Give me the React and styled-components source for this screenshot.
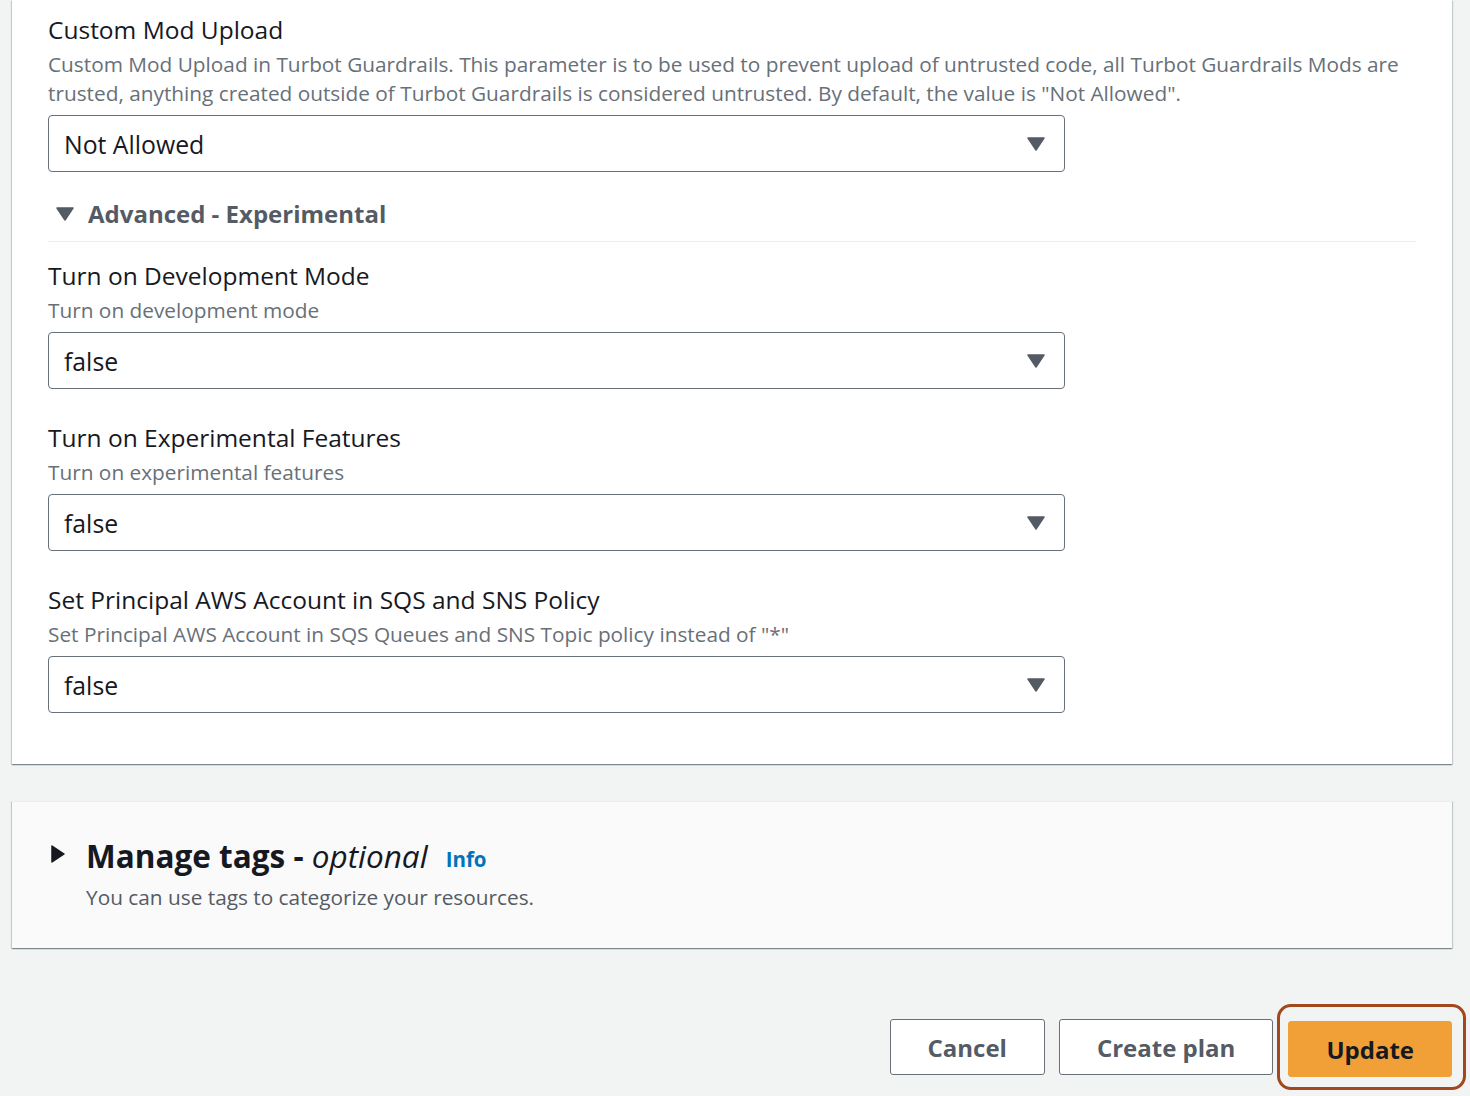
import styled, { createGlobalStyle } from "styled-components";

const GlobalStyle = createGlobalStyle`
  html, body {
    margin: 0;
    padding: 0;
    background: #f2f3f3;
    font-family: "Open Sans", "Noto Sans", sans-serif;
  }
`;

const fields = [
  {
    label: "Turn on Development Mode",
    desc: "Turn on development mode",
    value: "false",
  },
  {
    label: "Turn on Experimental Features",
    desc: "Turn on experimental features",
    value: "false",
  },
  {
    label: "Set Principal AWS Account in SQS and SNS Policy",
    desc: 'Set Principal AWS Account in SQS Queues and SNS Topic policy instead of "*"',
    value: "false",
  },
];

function Caret({ dir = "down", color = "#545b64", size = 18 }) {
  const d = dir === "down" ? "M1 3 H17 L9 15 Z" : "M3 1 V17 L15 9 Z";
  return (
    <svg width={size} height={size} viewBox="0 0 18 18">
      <path d={d} fill={color} stroke={color} strokeWidth="1.5" strokeLinejoin="round" />
    </svg>
  );
}

function Select({ value }) {
  return (
    <SelectBox>
      <span>{value}</span>
      <Caret />
    </SelectBox>
  );
}

function Field({ label, desc, value, spacing }) {
  return (
    <FieldWrap $spacing={spacing}>
      <Label>{label}</Label>
      <Desc>{desc}</Desc>
      <Select value={value} />
    </FieldWrap>
  );
}

export default function App() {
  return (
    <Page>
      <GlobalStyle />
      <Card>
        <Field
          spacing={0}
          label="Custom Mod Upload"
          desc={
            'Custom Mod Upload in Turbot Guardrails. This parameter is to be used to prevent upload of untrusted code, all Turbot Guardrails Mods are trusted, anything created outside of Turbot Guardrails is considered untrusted. By default, the value is "Not Allowed".'
          }
          value="Not Allowed"
        />
        <Expander>
          <Caret />
          <span>Advanced - Experimental</span>
        </Expander>
        {fields.map((f, i) => (
          <Field key={f.label} spacing={i === 0 ? 16 : 31} {...f} />
        ))}
      </Card>
      <TagsCard>
        <TagsHead>
          <Caret dir="right" color="#16191f" />
          <TagsTitle>
            Manage tags - <em>optional</em>
          </TagsTitle>
          <InfoLink>Info</InfoLink>
        </TagsHead>
        <TagsDesc>You can use tags to categorize your resources.</TagsDesc>
      </TagsCard>
      <Actions>
        <Button>Cancel</Button>
        <Button>Create plan</Button>
        <FocusRing>
          <Button $primary>Update</Button>
        </FocusRing>
      </Actions>
    </Page>
  );
}

const Page = styled.div`
  width: 1470px;
  height: 1096px;
  overflow: hidden;
  box-sizing: border-box;
  padding: 0 18px 0 12px;
`;

const Card = styled.div`
  background: #fff;
  box-shadow: 0 1px 1px 0 rgba(0, 28, 36, 0.3), 1px 1px 1px 0 rgba(0, 28, 36, 0.15),
    -1px 1px 1px 0 rgba(0, 28, 36, 0.15);
  padding: 12px 36px 51px 36px;
`;

const FieldWrap = styled.div`
  margin-top: ${(p) => p.$spacing}px;
`;

const Label = styled.div`
  font-size: 24.5px;
  line-height: 36px;
  color: #16191f;
`;

const Desc = styled.div`
  font-size: 20.8px;
  line-height: 29px;
  color: #687078;
  margin-top: 2px;
  margin-bottom: 7px;
`;

const SelectBox = styled.div`
  width: 1017px;
  height: 57px;
  box-sizing: border-box;
  border: 1px solid #687078;
  border-radius: 4px;
  display: flex;
  align-items: center;
  justify-content: space-between;
  padding: 0 19px 0 15px;
  font-size: 24.8px;
  color: #16191f;
`;

const Expander = styled.div`
  display: flex;
  align-items: center;
  gap: 14px;
  margin-top: 24px;
  padding: 0 0 9px 8px;
  border-bottom: 1px solid #eaeded;
  font-size: 24px;
  line-height: 36px;
  font-weight: 700;
  color: #545b64;
`;

const TagsCard = styled.div`
  margin-top: 37px;
  background: #fafafa;
  box-shadow: 0 1px 1px 0 rgba(0, 28, 36, 0.3), 1px 1px 1px 0 rgba(0, 28, 36, 0.15),
    -1px 1px 1px 0 rgba(0, 28, 36, 0.15);
  border-top: 1px solid #eaeded;
  padding: 32px 36px 36px 37px;
`;

const TagsHead = styled.div`
  display: flex;
  align-items: center;
  gap: 19px;
  svg {
    margin-top: -4px;
  }
`;

const TagsTitle = styled.div`
  font-size: 31.5px;
  line-height: 44px;
  font-weight: 700;
  color: #16191f;
  em {
    font-weight: 400;
  }
`;

const InfoLink = styled.span`
  font-size: 20.5px;
  font-weight: 700;
  color: #0073bb;
  margin-left: -1px;
  margin-top: 6px;
`;

const TagsDesc = styled.div`
  font-size: 20.8px;
  line-height: 30px;
  color: #545b64;
  margin-left: 37px;
  margin-top: 4px;
`;

const Actions = styled.div`
  display: flex;
  justify-content: flex-end;
  align-items: center;
  gap: 14px;
  margin-top: 56px;
  margin-right: -14px;
`;

const FocusRing = styled.div`
  padding: 14px 11px 10px 8px;
  border: 3px solid #a1481e;
  border-radius: 14px;
  margin-left: -10px;
`;

const Button = styled.button`
  height: 56px;
  box-sizing: border-box;
  padding: 0 ${(p) => (p.$primary ? "37px" : "37px")};
  border-radius: 3px;
  border: 1px solid ${(p) => (p.$primary ? "#f1a038" : "#687078")};
  background: ${(p) => (p.$primary ? "#f1a038" : "#fff")};
  color: ${(p) => (p.$primary ? "#16191f" : "#545b64")};
  font-family: inherit;
  font-size: 24px;
  font-weight: 700;
  cursor: pointer;
`;
